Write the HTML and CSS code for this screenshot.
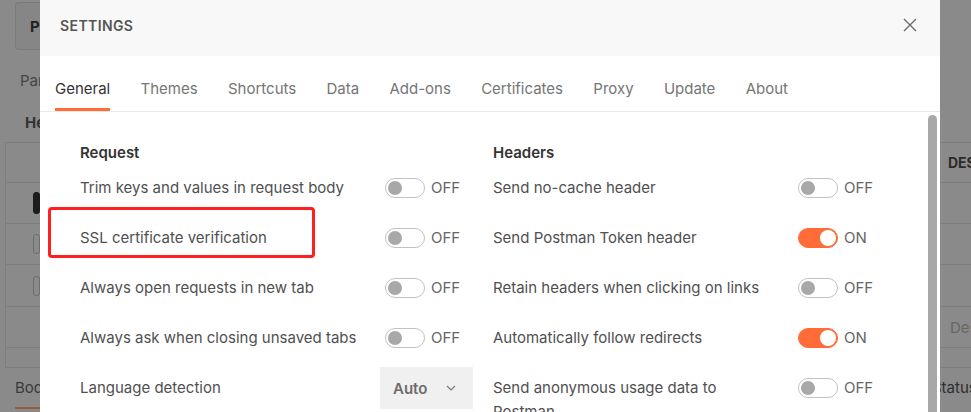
FILE: index.html
```html
<!DOCTYPE html>
<html lang="en">
<head>
  <meta charset="UTF-8">
  <title>Settings</title>
  <link rel="stylesheet" href="styles.css">
</head>
<body>
  <!-- Dimmed app behind the modal, left side -->
  <div class="app-strip app-left">
    <div class="req-tab">POST</div>
    <div class="bg-text par">Params</div>
    <div class="bg-text he">Headers</div>
    <div class="bg-table">
      <div class="bg-row r40"></div>
      <div class="bg-row r41"><span class="bg-check checked"></span></div>
      <div class="bg-row r41"><span class="bg-check"></span></div>
      <div class="bg-row r42"><span class="bg-check"></span></div>
      <div class="bg-row r41"></div>
      <div class="bg-row r20"></div>
    </div>
    <div class="bg-text body-tab">Body</div>
  </div>

  <!-- Settings modal -->
  <div class="modal">
    <div class="modal-header">
      <span class="modal-title">SETTINGS</span>
      <span class="close-btn">
        <svg width="14" height="14" viewBox="0 0 14 14"><path d="M1 1L13 13M13 1L1 13" stroke="#6b6b6b" stroke-width="1.4" fill="none"/></svg>
      </span>
    </div>

    <nav class="tabs">
      <span class="tab active">General</span>
      <span class="tab">Themes</span>
      <span class="tab">Shortcuts</span>
      <span class="tab">Data</span>
      <span class="tab">Add-ons</span>
      <span class="tab">Certificates</span>
      <span class="tab">Proxy</span>
      <span class="tab">Update</span>
      <span class="tab">About</span>
    </nav>

    <div class="modal-body">
      <div class="settings-grid">
        <section class="col">
          <h3>Request</h3>
          <div class="row">
            <span class="label">Trim keys and values in request body</span>
            <span class="toggle"></span><span class="state">OFF</span>
          </div>
          <div class="row">
            <span class="highlight"></span>
            <span class="label">SSL certificate verification</span>
            <span class="toggle"></span><span class="state">OFF</span>
          </div>
          <div class="row">
            <span class="label">Always open requests in new tab</span>
            <span class="toggle"></span><span class="state">OFF</span>
          </div>
          <div class="row">
            <span class="label">Always ask when closing unsaved tabs</span>
            <span class="toggle"></span><span class="state">OFF</span>
          </div>
          <div class="row">
            <span class="label">Language detection</span>
            <span class="select">Auto
              <svg width="10" height="6" viewBox="0 0 10 6"><path d="M1 1L5 5L9 1" stroke="#7a7a7a" stroke-width="1.2" fill="none"/></svg>
            </span>
          </div>
        </section>

        <section class="col">
          <h3>Headers</h3>
          <div class="row">
            <span class="label">Send no-cache header</span>
            <span class="toggle"></span><span class="state">OFF</span>
          </div>
          <div class="row">
            <span class="label">Send Postman Token header</span>
            <span class="toggle on"></span><span class="state">ON</span>
          </div>
          <div class="row">
            <span class="label">Retain headers when clicking on links</span>
            <span class="toggle"></span><span class="state">OFF</span>
          </div>
          <div class="row">
            <span class="label">Automatically follow redirects</span>
            <span class="toggle on"></span><span class="state">ON</span>
          </div>
          <div class="row">
            <span class="label">Send anonymous usage data to Postman</span>
            <span class="toggle"></span><span class="state">OFF</span>
          </div>
        </section>
      </div>
      <div class="scrollbar"><div class="thumb"></div></div>
    </div>
  </div>

  <!-- Dimmed app behind the modal, right side -->
  <div class="app-strip app-right">
    <div class="bg-table top">
      <div class="bg-row r40 bold-cell">DESCRIPTION</div>
      <div class="bg-row r41"></div>
      <div class="bg-row r41"></div>
      <div class="bg-row r42"></div>
      <div class="bg-row r41 muted-cell">Description</div>
      <div class="bg-row r20"></div>
    </div>
    <div class="bg-text status">Status</div>
  </div>
</body>
</html>
```

FILE: styles.css
```css
/* Page frame */
body {
  margin: 0;
  width: 971px;
  height: 412px;
  overflow: hidden;
  background: #8a8a8a;
  font-family: Inter, "Noto Sans", sans-serif;
  font-size: 14px;
  display: grid;
  grid-template-columns: 40px 900px 31px;
}

/* Dimmed app behind the modal */
.app-strip {
  overflow: hidden;
  white-space: nowrap;
  color: #222;
}
.req-tab {
  margin: 2px 0 0 15px;
  height: 46px;
  line-height: 48px;
  padding-left: 14px;
  border: 1px solid #7b7b7b;
  border-right: none;
  border-radius: 4px 0 0 4px;
  background: #868686;
  font-weight: 700;
  font-size: 15px;
}
.bg-text {
  line-height: 20px;
  font-size: 15px;
}
.par {
  margin: 21px 0 0 20px;
  color: #454545;
}
.he {
  margin: 22px 0 0 25px;
  font-weight: 700;
  color: #333;
}
.bg-table {
  margin-top: 9px;
  margin-left: 5px;
  border-left: 1px solid #7e7e7e;
  border-top: 1px solid #7e7e7e;
}
.bg-row {
  border-bottom: 1px solid #7e7e7e;
  box-sizing: border-box;
  display: flex;
  align-items: center;
}
.r40 { height: 40px; }
.r41 { height: 41px; }
.r42 { height: 42px; }
.r20 { height: 20px; }
.bg-check {
  margin-left: 27px;
  width: 18px;
  height: 18px;
  border: 1px solid #6e6e6e;
  border-radius: 3px;
}
.bg-check.checked {
  width: 20px;
  height: 20px;
  background: #1c1c1c;
  border-color: #1c1c1c;
}
.body-tab {
  margin: 10px 0 0 15px;
  color: #3a3a3a;
  padding-bottom: 9px;
  border-bottom: 2px solid #9a5a40;
  width: 40px;
}
.app-right .bg-table.top {
  margin: 142px 0 0 0;
  border-left: none;
}
.bold-cell {
  padding-left: 8px;
  font-weight: 700;
  color: #2a2a2a;
}
.muted-cell {
  padding-left: 10px;
  color: #666;
  font-size: 15px;
}
.status {
  margin: 10px 0 0 -8px;
  color: #2e2e2e;
}

/* Modal */
.modal {
  background: #fff;
  display: flex;
  flex-direction: column;
  color: #505050;
}
.modal-header {
  height: 56px;
  box-sizing: border-box;
  padding: 16px 23px 0 20px;
  background: #f8f8f8;
  display: flex;
  justify-content: space-between;
}
.modal-title {
  line-height: 20px;
  font-weight: 600;
  letter-spacing: 0.4px;
  color: #555;
}
.close-btn {
  display: flex;
  align-items: center;
  height: 18px;
}

/* Tabs */
.tabs {
  height: 55px;
  padding-left: 15px;
  display: flex;
  gap: 30.3px;
  border-bottom: 1px solid #e8e8e8;
}
.tab {
  box-sizing: border-box;
  height: 55px;
  padding-top: 23px;
  line-height: 20px;
  font-size: 15px;
  color: #757575;
  border-bottom: 3px solid transparent;
}
.tab.active {
  color: #333;
  border-bottom-color: #ff6c37;
}

/* Settings body */
.modal-body {
  flex: 1;
  display: grid;
  grid-template-columns: 1fr 12px;
  min-height: 0;
}
.settings-grid {
  padding: 31px 0 0 40px;
  display: grid;
  grid-template-columns: 413px 413px;
  align-content: start;
}
h3 {
  margin: 0;
  font-size: 15px;
  line-height: 20px;
  font-weight: 600;
  color: #333;
}
.row {
  position: relative;
  height: 50px;
  box-sizing: border-box;
  padding-top: 13px;
  display: flex;
  align-items: flex-start;
}
.label {
  flex: none;
  width: 282px;
  padding-right: 23px;
  line-height: 24px;
  font-size: 15px;
  color: #505050;
}
.toggle {
  position: relative;
  margin-top: 2px;
  width: 40px;
  height: 20px;
  box-sizing: border-box;
  border: 1px solid #c2c2c2;
  border-radius: 10px;
}
.toggle::after {
  content: "";
  position: absolute;
  top: 2px;
  left: 2px;
  width: 14px;
  height: 14px;
  border-radius: 50%;
  background: #a8a8a8;
}
.toggle.on {
  background: #ff6c37;
  border-color: #ff6c37;
}
.toggle.on::after {
  left: auto;
  right: 1px;
  top: 1px;
  width: 16px;
  height: 16px;
  background: #fff;
}
.state {
  margin-left: 6px;
  line-height: 24px;
  font-size: 15px;
  color: #666;
}
.select {
  margin: -9px 0 0 -5px;
  width: 93px;
  height: 42px;
  box-sizing: border-box;
  padding: 0 17px 0 13px;
  background: #f0f0f0;
  display: flex;
  align-items: center;
  justify-content: space-between;
  font-weight: 600;
  font-size: 15px;
  color: #6b6b6b;
}
.highlight {
  position: absolute;
  top: -6px;
  left: -32px;
  width: 267px;
  height: 51px;
  box-sizing: border-box;
  border: 3px solid #ff1f1f;
  border-radius: 4px;
}

/* Scrollbar */
.scrollbar {
  padding-top: 3px;
}
.thumb {
  width: 9px;
  height: 100%;
  background: #a8a8a8;
  border-radius: 5px 5px 0 0;
}
```
